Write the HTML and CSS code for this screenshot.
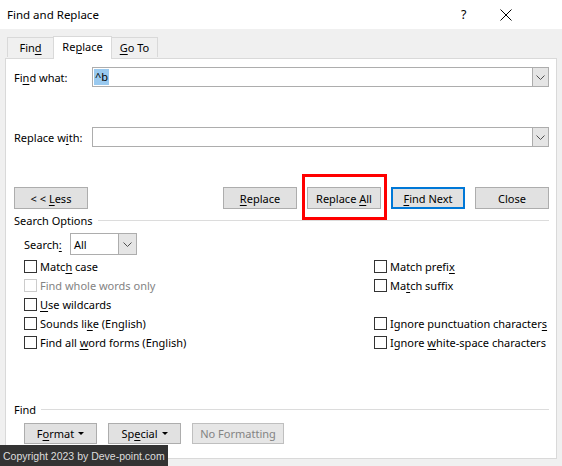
FILE: index.html
```html
<!DOCTYPE html>
<html>
<head>
<meta charset="utf-8">
<link rel="stylesheet" href="styles.css">
</head>
<body>
<div class="window">
  <div class="titlebar">
    <span class="title">Find and Replace</span>
    <span class="help">?</span>
    <span class="close-x">
      <svg width="12" height="12" viewBox="0 0 12 12"><path d="M0.5 0.5 L11.5 11.5 M11.5 0.5 L0.5 11.5" stroke="#000" stroke-width="1"/></svg>
    </span>
  </div>
  <div class="client">
    <div class="tabs">
      <div class="tab t-find"><span>Fin<u>d</u></span></div>
      <div class="tab active"><span>Re<u>p</u>lace</span></div>
      <div class="tab t-goto"><span><u>G</u>o To</span></div>
    </div>
    <div class="panel">
      <div class="field-row">
        <label class="field-label">Fi<u>n</u>d what:</label>
        <div class="combo">
          <div class="combo-text"><span class="sel">^b</span></div>
          <div class="combo-btn"><svg width="9" height="5" viewBox="0 0 9 5"><path d="M0.5 0.5 L4.5 4.5 L8.5 0.5" fill="none" stroke="#505050" stroke-width="1"/></svg></div>
        </div>
      </div>
      <div class="field-row second">
        <label class="field-label">Replace w<u>i</u>th:</label>
        <div class="combo">
          <div class="combo-text"></div>
          <div class="combo-btn"><svg width="9" height="5" viewBox="0 0 9 5"><path d="M0.5 0.5 L4.5 4.5 L8.5 0.5" fill="none" stroke="#505050" stroke-width="1"/></svg></div>
        </div>
      </div>
      <div class="button-row">
        <div class="btn less"><span>&lt; &lt; <u>L</u>ess</span></div>
        <div class="spacer"></div>
        <div class="btn"><span><u>R</u>eplace</span></div>
        <div class="btn highlight"><span>Replace <u>A</u>ll</span><span class="redbox"></span></div>
        <div class="btn default"><span><u>F</u>ind Next</span></div>
        <div class="btn"><span>Close</span></div>
      </div>
      <div class="group-head"><span>Search Options</span><span class="rule"></span></div>
      <div class="search-row">
        <label class="search-label">Search<u>:</u></label>
        <div class="select">
          <div class="select-text"><span>All</span></div>
          <div class="select-btn"><svg width="9" height="5" viewBox="0 0 9 5"><path d="M0.5 0.5 L4.5 4.5 L8.5 0.5" fill="none" stroke="#505050" stroke-width="1"/></svg></div>
        </div>
      </div>
      <div class="options">
        <div class="opt"><span class="box"></span><span>Matc<u>h</u> case</span></div>
        <div class="opt"><span class="box"></span><span>Match prefi<u>x</u></span></div>
        <div class="opt disabled"><span class="box"></span><span>Find whole words only</span></div>
        <div class="opt"><span class="box"></span><span>Ma<u>t</u>ch suffix</span></div>
        <div class="opt"><span class="box"></span><span><u>U</u>se wildcards</span></div>
        <div class="opt"></div>
        <div class="opt"><span class="box"></span><span>Sounds li<u>k</u>e (English)</span></div>
        <div class="opt"><span class="box"></span><span>Ignore punctuation character<u>s</u></span></div>
        <div class="opt"><span class="box"></span><span>Find all <u>w</u>ord forms (English)</span></div>
        <div class="opt"><span class="box"></span><span>Ignore <u>w</u>hite-space characters</span></div>
      </div>
      <div class="filler"></div>
      <div class="group-head find-head"><span>Find</span><span class="rule"></span></div>
      <div class="format-row">
        <div class="btn small"><span>F<u>o</u>rmat</span><span class="caret"></span></div>
        <div class="btn small"><span>Sp<u>e</u>cial</span><span class="caret"></span></div>
        <div class="btn small disabled-btn"><span>No Formatting</span></div>
      </div>
    </div>
  </div>
  <div class="copyright">Copyright 2023 by Deve-point.com</div>
</div>
</body>
</html>
```
FILE: styles.css
```css
* { box-sizing: border-box; }
html, body { margin: 0; padding: 0; }
body {
  width: 562px;
  height: 466px;
  overflow: hidden;
  font-family: "Noto Sans", "Lato", sans-serif;
  font-size: 11px;
  color: #000;
  background: #f0f0f0;
}
u { text-decoration: underline; text-underline-offset: 2px; }
.window { position: relative; width: 562px; height: 466px; }

.titlebar {
  height: 29px;
  background: #fff;
  display: flex;
  align-items: center;
  padding-left: 7px;
}
.title { width: 454px; font-size: 11.5px; }
.help { width: 39px; font-size: 12.5px; }
.close-x { width: 62px; display: flex; align-items: center; }

.client { padding: 7px 5px 0 5px; }
.tabs { display: flex; align-items: flex-end; padding-left: 2px; height: 22px; }
.tab {
  height: 20px;
  border: 1px solid #d9d9d9;
  border-bottom: none;
  background: #f0f0f0;
  display: flex;
  align-items: center;
  justify-content: center;
  margin-bottom: 1px;
}
.t-find { width: 47px; }
.t-goto { width: 47px; }
.tab.active {
  width: 59px;
  height: 23px;
  background: #fff;
  margin-bottom: -1px;
  position: relative;
  z-index: 1;
  margin-left: -1px;
  margin-right: -1px;
  align-items: flex-start;
  padding-top: 2px;
}
.panel {
  width: 552px;
  height: 401px;
  background: #fff;
  border: 1px solid #d9d9d9;
  padding: 8px 7px 0 8px;
  display: flex;
  flex-direction: column;
}
.field-row { display: flex; align-items: center; height: 20px; }
.field-row.second { margin-top: 40px; }
.field-label { width: 78px; }
.combo {
  flex: 1;
  height: 20px;
  border: 1px solid #adadad;
  display: flex;
}
.combo-text { flex: 1; padding: 1px 0 0 1px; }
.sel { background: #99c9ef; display: inline-block; height: 16px; line-height: 16px; padding: 0 1px; }
.combo-btn {
  width: 17px;
  background: #e5e5e5;
  border: 1px solid #adadad;
  margin: -1px -1px -1px 0;
  display: flex;
  align-items: center;
  justify-content: center;
}

.button-row { display: flex; margin-top: 40px; height: 22px; gap: 10px; }
.spacer { flex: 1; }
.btn {
  width: 74px;
  height: 22px;
  background: #e1e1e1;
  border: 1px solid #adadad;
  display: flex;
  align-items: center;
  justify-content: center;
  position: relative;
  white-space: pre;
}
.btn.default { border: 2px solid #0078d7; }
.redbox {
  position: absolute;
  left: -6px;
  right: -7px;
  top: -14px;
  bottom: -12px;
  border: 3px solid #ff0000;
}

.group-head { display: flex; align-items: center; height: 16px; margin-top: 3px; }
.group-head .rule { flex: 1; height: 1px; background: #dcdcdc; margin-left: 5px; margin-top: 1px; }

.search-row { display: flex; align-items: center; margin-top: 5px; padding-left: 10px; height: 22px; }
.search-label { width: 46px; }
.select {
  width: 67px;
  height: 22px;
  border: 1px solid #adadad;
  display: flex;
}
.select-text { flex: 1; padding-left: 3px; display: flex; align-items: center; }
.select-btn {
  width: 18px;
  background: #e5e5e5;
  border-left: 1px solid #adadad;
  display: flex;
  align-items: center;
  justify-content: center;
}

.options {
  display: grid;
  grid-template-columns: 350px 1fr;
  grid-auto-rows: 19px;
  margin-top: 2px;
  padding-left: 10px;
}
.opt { display: flex; align-items: center; white-space: nowrap; }
.box {
  width: 13px;
  height: 13px;
  border: 1px solid #333;
  background: #fff;
  margin-right: 3px;
  flex: none;
}
.opt.disabled { color: #838383; }
.opt.disabled .box { border-color: #cccccc; }

.filler { flex: 1; }
.find-head { margin-top: 0; }
.format-row { display: flex; gap: 11px; padding-left: 10px; margin-top: 6px; margin-bottom: 14px; }
.btn.small { width: 73px; height: 21px; }
.btn.small:nth-child(3) { width: 92px; }
.caret {
  width: 0; height: 0;
  border-left: 3px solid transparent;
  border-right: 3px solid transparent;
  border-top: 3px solid #000;
  margin-left: 4px;
}
.btn.disabled-btn { background: #e6e6e6; border-color: #bfbfbf; color: #838383; }

.copyright {
  position: absolute;
  left: 0;
  bottom: 0;
  width: 168px;
  height: 21px;
  background: #333333;
  color: #dddddd;
  font-family: "Liberation Sans", Arial, sans-serif;
  font-size: 10.5px;
  display: flex;
  align-items: center;
  padding-left: 3px;
  white-space: nowrap;
}
```
